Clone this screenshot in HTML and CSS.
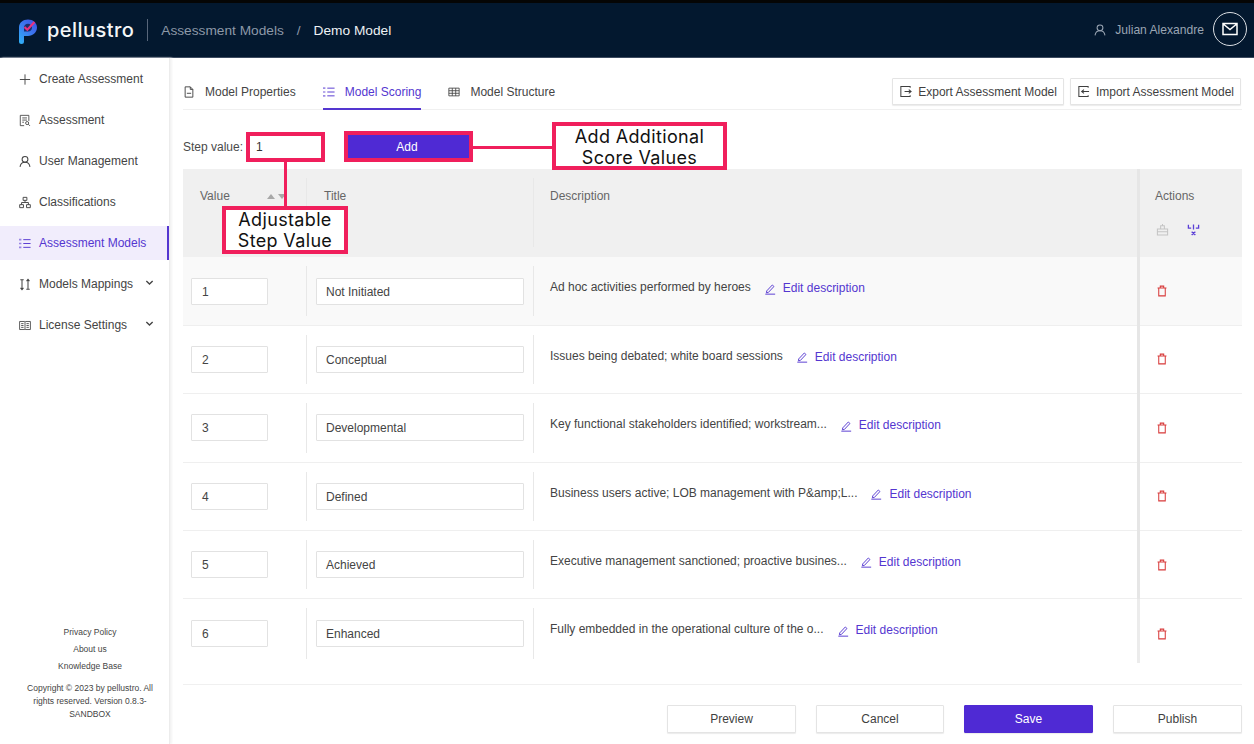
FILE: index.html
```html
<!DOCTYPE html>
<html lang="en">
<head>
<meta charset="utf-8">
<title>Demo Model</title>
<link rel="stylesheet" href="styles.css">
</head>
<body>
<svg class="defs" width="0" height="0" aria-hidden="true">
  <symbol id="i-list" viewBox="0 0 14 14"><path d="M5 2.500h8.500M5 7h8.500M5 11.500h8.500" fill="none" stroke="currentColor" stroke-width="1.100"/><path d="M.5 2.500h2.500M.5 7h2.500M.5 11.500h2.500" fill="none" stroke="currentColor" stroke-width="2" stroke-dasharray=".8 .5"/></symbol>
  <symbol id="i-pen" viewBox="0 0 14 14"><path d="M3.200 9.200 9.700 2.300l1.900 1.800-6.500 6.900-2.300.4zM1.500 13h11.500" fill="none" stroke="currentColor" stroke-width="1.100"/></symbol>
  <symbol id="i-trash" viewBox="0 0 14 14"><path d="M1.800 3.500h10.400M5 3.300V1.300h4v2M3.200 3.500v9.200h7.600V3.500" fill="none" stroke="currentColor" stroke-width="1.200"/></symbol>
  <symbol id="i-chev" viewBox="0 0 10 10"><path d="M1.500 3.300 5 6.700l3.500-3.400" fill="none" stroke="currentColor" stroke-width="1.500"/></symbol>
  <symbol id="i-user" viewBox="0 0 14 14"><circle cx="7" cy="4.500" r="3.400" fill="none" stroke="currentColor" stroke-width="1.200"/><path d="M1.200 13.300c.4-3.700 2.500-5.500 5.800-5.500s5.400 1.800 5.800 5.500" fill="none" stroke="currentColor" stroke-width="1.200"/></symbol>
</svg>

<header class="topbar">
  <div class="brand">
    <svg class="logo" viewBox="0 0 18 25" width="18" height="25" aria-hidden="true">
      <defs><linearGradient id="lg" x1="0" y1="1" x2=".8" y2="0"><stop offset="0" stop-color="#2fb4f7"/><stop offset=".55" stop-color="#3b7cf0"/><stop offset="1" stop-color="#3f55e6"/></linearGradient></defs>
      <path d="M0 8.500C0 3.500 4 .5 9 .5s9 3.500 9 8-4 8.500-9 8.500H5v5.500Q5 25 2.500 25T0 22.500z" fill="url(#lg)"/>
      <path d="M5 8.700c0-2.300 1.800-3.900 4-3.900s4 1.700 4 3.900-1.800 3.900-4 3.900H5z" fill="#1a2f6e"/>
      <path d="M5.500 8 8.300 10.700 15.500 3" fill="none" stroke="#e8317f" stroke-width="2.200"/>
    </svg>
    <span class="wordmark">pellustro</span>
  </div>
  <nav class="crumbs">
    <span class="crumb-dim">Assessment Models</span>
    <span class="crumb-sep">/</span>
    <span class="crumb-cur">Demo Model</span>
  </nav>
  <div class="account">
    <svg class="acc-icon"><use href="#i-user"/></svg>
    <span class="acc-name">Julian Alexandre</span>
    <span class="mail">
      <svg viewBox="0 0 16 14" width="16" height="14"><path d="M1 1.500h14v11H1zM1.300 2 8 7.500 14.700 2" fill="none" stroke="#fff" stroke-width="1.500"/></svg>
    </span>
  </div>
</header>

<div class="shell">
  <aside class="sidebar">
    <ul class="menu">
      <li class="item"><svg class="mi" viewBox="0 0 14 14"><path d="M7 1v12M1 7h12" stroke="currentColor" stroke-width="1.100"/></svg><span>Create Assessment</span></li>
      <li class="item"><svg class="mi" viewBox="0 0 14 14"><path d="M6 13H1.500V1h10v6.500M3.800 4h5.500M3.800 6.500h5.500M3.800 9h2" fill="none" stroke="currentColor" stroke-width="1"/><circle cx="9.500" cy="10" r="1.800" fill="none" stroke="currentColor"/><path d="m10.800 11.300 2 2" stroke="currentColor"/></svg><span>Assessment</span></li>
      <li class="item"><svg class="mi"><use href="#i-user"/></svg><span>User Management</span></li>
      <li class="item"><svg class="mi" viewBox="0 0 14 14"><path d="M4.800 1h4.400v3.500H4.800zM.8 9.500h4.400V13H.8zM8.800 9.500h4.400V13H8.800zM7 4.500V7M3 9.500V7h8v2.500" fill="none" stroke="currentColor" stroke-width="1.100"/></svg><span>Classifications</span></li>
      <li class="item active"><svg class="mi"><use href="#i-list"/></svg><span>Assessment Models</span></li>
      <li class="item"><svg class="mi" viewBox="0 0 14 14"><path d="M3.500 2v11M1.500 1.500h4M10.500 1v11M8.500 12.500h4M1.800 11 3.500 13l1.700-2M8.800 3 10.500 1l1.700 2" fill="none" stroke="currentColor" stroke-width="1.200"/></svg><span>Models Mappings</span><svg class="chev"><use href="#i-chev"/></svg></li>
      <li class="item"><svg class="mi" viewBox="0 0 14 14"><path d="M.7 2.300h5.800l.5.500.5-.5h5.800v9.400H7.500l-.5.500-.5-.5H.7zM7 2.800v8.900M2.500 4.800h2.800M2.500 7h2.800M2.500 9.200h2.800M8.700 4.800h2.800M8.700 7h2.800M8.700 9.200h2.800" fill="none" stroke="currentColor" stroke-width="1"/></svg><span>License Settings</span><svg class="chev"><use href="#i-chev"/></svg></li>
    </ul>
    <footer class="side-foot">
      <p class="foot-link">Privacy Policy</p>
      <p class="foot-link">About us</p>
      <p class="foot-link">Knowledge Base</p>
      <p class="copy">Copyright © 2023 by pellustro. All rights reserved. Version 0.8.3-SANDBOX</p>
    </footer>
  </aside>

  <main class="main">
    <div class="tabbar">
      <div class="tab"><svg class="ti" viewBox="0 0 14 14"><path d="M2.500 1h6l3 3v9h-9zM8.500 1v3h3M4.500 8.500h5" fill="none" stroke="currentColor" stroke-width="1.100"/></svg><span>Model Properties</span></div>
      <div class="tab tab-on"><svg class="ti"><use href="#i-list"/></svg><span>Model Scoring</span></div>
      <div class="tab"><svg class="ti" viewBox="0 0 14 14"><path d="M1 2.500h12v9H1zM1 5.500h12M1 8.500h12M5 2.500v9M9 2.500v9" fill="none" stroke="currentColor" stroke-width="1"/></svg><span>Model Structure</span></div>
      <div class="tab-actions">
        <button class="btn btn-io"><svg class="bi" viewBox="0 0 14 14"><path d="M12 3V1.500H2v11h10V11M6 7h7M10.500 5 13 7l-2.500 2" fill="none" stroke="currentColor" stroke-width="1.100"/></svg>Export Assessment Model</button>
        <button class="btn btn-io"><svg class="bi" viewBox="0 0 14 14"><path d="M12 3V1.500H2v11h10V11M5 7h8M7.500 5 5 7l2.500 2" fill="none" stroke="currentColor" stroke-width="1.100"/></svg>Import Assessment Model</button>
      </div>
    </div>

    <div class="steprow">
      <label class="step-label">Step value:</label>
      <div class="step-input">1</div>
      <button class="btn-add">Add</button>
    </div>

    <div class="grid">
      <div class="row head">
        <div class="cell c-value"><span>Value</span><span class="sort"><i class="up"></i><i class="down"></i></span></div>
        <div class="cell c-title">Title</div>
        <div class="cell c-desc">Description</div>
        <div class="cell c-act">
          <span>Actions</span>
          <span class="head-icons">
            <svg viewBox="0 0 14 14" width="13" height="13"><path d="M1.500 6.500h11v6.500h-11zM5 6.500V3h4v3.500M7 1v2M1.500 9.500h11" fill="none" stroke="#c4c4c4" stroke-width="1.100"/></svg>
            <svg viewBox="0 0 14 14" width="13" height="13"><path d="M1.500 2v3.500h3M12.500 2v3.500h-3M7 1.500V7M5 9.500l4 3.500M9 9.500 5 13" fill="none" stroke="#5b3fd6" stroke-width="1.400"/></svg>
          </span>
        </div>
      </div>

      <div class="row body first">
        <div class="cell c-value"><div class="field f-val">1</div></div>
        <div class="cell c-title"><div class="field f-title">Not Initiated</div></div>
        <div class="cell c-desc"><span class="dtext">Ad hoc activities performed by heroes</span><a class="edit"><svg class="ei"><use href="#i-pen"/></svg>Edit description</a></div>
        <div class="cell c-act"><svg class="trash"><use href="#i-trash"/></svg></div>
      </div>
      <div class="row body">
        <div class="cell c-value"><div class="field f-val">2</div></div>
        <div class="cell c-title"><div class="field f-title">Conceptual</div></div>
        <div class="cell c-desc"><span class="dtext">Issues being debated; white board sessions</span><a class="edit"><svg class="ei"><use href="#i-pen"/></svg>Edit description</a></div>
        <div class="cell c-act"><svg class="trash"><use href="#i-trash"/></svg></div>
      </div>
      <div class="row body">
        <div class="cell c-value"><div class="field f-val">3</div></div>
        <div class="cell c-title"><div class="field f-title">Developmental</div></div>
        <div class="cell c-desc"><span class="dtext">Key functional stakeholders identified; workstream...</span><a class="edit"><svg class="ei"><use href="#i-pen"/></svg>Edit description</a></div>
        <div class="cell c-act"><svg class="trash"><use href="#i-trash"/></svg></div>
      </div>
      <div class="row body">
        <div class="cell c-value"><div class="field f-val">4</div></div>
        <div class="cell c-title"><div class="field f-title">Defined</div></div>
        <div class="cell c-desc"><span class="dtext">Business users active; LOB management with P&amp;amp;L...</span><a class="edit"><svg class="ei"><use href="#i-pen"/></svg>Edit description</a></div>
        <div class="cell c-act"><svg class="trash"><use href="#i-trash"/></svg></div>
      </div>
      <div class="row body">
        <div class="cell c-value"><div class="field f-val">5</div></div>
        <div class="cell c-title"><div class="field f-title">Achieved</div></div>
        <div class="cell c-desc"><span class="dtext">Executive management sanctioned; proactive busines...</span><a class="edit"><svg class="ei"><use href="#i-pen"/></svg>Edit description</a></div>
        <div class="cell c-act"><svg class="trash"><use href="#i-trash"/></svg></div>
      </div>
      <div class="row body last">
        <div class="cell c-value"><div class="field f-val">6</div></div>
        <div class="cell c-title"><div class="field f-title">Enhanced</div></div>
        <div class="cell c-desc"><span class="dtext">Fully embedded in the operational culture of the o...</span><a class="edit"><svg class="ei"><use href="#i-pen"/></svg>Edit description</a></div>
        <div class="cell c-act"><svg class="trash"><use href="#i-trash"/></svg></div>
      </div>
    </div>

    <div class="actions">
      <button class="btn btn-foot btn-wide">Preview</button>
      <button class="btn btn-foot">Cancel</button>
      <button class="btn btn-foot btn-wide btn-primary">Save</button>
      <button class="btn btn-foot btn-wide">Publish</button>
    </div>

    <div class="conn conn-h"></div>
    <div class="conn conn-v"></div>
    <div class="callout callout-add">Add Additional<br>Score Values</div>
    <div class="callout callout-step">Adjustable<br>Step Value</div>
  </main>
</div>
</body>
</html>
```
FILE: styles.css
```css
* { box-sizing: border-box; }
html, body { margin: 0; padding: 0; }
body {
  width: 1254px;
  height: 744px;
  overflow: hidden;
  background: #fff;
  font-family: "Liberation Sans", Arial, sans-serif;
  font-size: 12px;
  color: #3f3f3f;
  display: flex;
  flex-direction: column;
}
.defs { position: absolute; }
p { margin: 0; }

/* top bar */
.topbar {
  height: 58px;
  flex: none;
  background: #03182f;
  border-top: 3px solid #050505;
  border-bottom: 1px solid #3d4b60;
  display: flex;
  align-items: center;
  padding: 0 7px 0 19px;
}
.brand { display: flex; align-items: center; gap: 10px; padding-top: 3px; }
.wordmark {
  font-family: Inter, sans-serif;
  font-size: 20px;
  font-weight: 500;
  letter-spacing: .45px;
  color: #f4f6f8;
  position: relative;
  top: -2px;
}
.crumbs {
  margin-left: 13px;
  padding-left: 13px;
  border-left: 1px solid #58667a;
  height: 22px;
  display: flex;
  align-items: center;
  font-size: 13.700px;
}
.crumb-dim { color: #8d99a8; }
.crumb-sep { color: #8d99a8; margin: 0 13px; }
.crumb-cur { color: #eef1f4; }
.account { margin-left: auto; display: flex; align-items: center; }
.acc-icon { width: 12px; height: 12px; color: #9aa5b3; margin-right: 9px; }
.acc-name { color: #9aa5b3; font-size: 12.100px; }
.mail {
  margin: 0 0 2px 9px;
  width: 34px;
  height: 34px;
  border: 1px solid #d9dde2;
  border-radius: 50%;
  display: flex;
  align-items: center;
  justify-content: center;
}

/* shell */
.shell { flex: 1; display: flex; min-height: 0; }

/* sidebar */
.sidebar {
  width: 170px;
  flex: none;
  display: flex;
  flex-direction: column;
  border-right: 1px solid #ececec;
  box-shadow: 2px 0 2px #f3f3f3;
}
.menu {
  list-style: none;
  margin: 0;
  padding: 4px 0 0;
  display: flex;
  flex-direction: column;
  gap: 7px;
}
.item {
  height: 34px;
  display: flex;
  align-items: center;
  padding-left: 19px;
  color: #444;
  font-size: 12px;
  position: relative;
}
.mi { width: 12px; height: 13px; margin-right: 8px; flex: none; overflow: visible; }
.item.active { background: #f1edfc; color: #5436d0; border-right: 2px solid #5436d0; }
.chev { width: 9px; height: 9px; position: absolute; left: 145px; top: 11px; color: #444; }
.side-foot {
  margin-top: auto;
  padding: 0 15px 23px 26px;
  text-align: center;
  font-size: 8.500px;
  color: #444;
}
.foot-link { line-height: 17px; }
.copy { line-height: 13px; margin-top: 7px; }

/* main */
.main { flex: 1; position: relative; padding: 0 12px 0 13px; min-width: 0; }
.tabbar {
  height: 52px;
  display: flex;
  align-items: flex-end;
  border-bottom: 1px solid #f0f0f0;
}
.tab {
  height: 33px;
  display: flex;
  align-items: center;
  margin-right: 27px;
  padding-bottom: 4px;
  color: #444;
  position: relative;
  top: 1px;
}
.ti { width: 12px; height: 12px; margin-right: 10px; flex: none; }
.tab-on { color: #5436d0; border-bottom: 2px solid #5436d0; padding-bottom: 2px; }
.tab-actions {
  margin-left: auto;
  display: flex;
  gap: 6px;
  align-self: flex-start;
  padding: 20px 1px 0 0;
}
.btn {
  font-family: inherit;
  font-size: 12px;
  color: #3f3f3f;
  background: #fff;
  border: 1px solid #e4e4e4;
  box-shadow: 0 1px 1px #ececec;
  border-radius: 1px;
  padding: 0;
}
.btn-io {
  height: 27px;
  padding: 0 6px;
  display: flex;
  align-items: center;
}
.bi { width: 13px; height: 13px; margin-right: 6px; }

/* step row */
.steprow {
  height: 31px;
  margin-top: 21px;
  margin-bottom: 7.400px;
  display: flex;
  align-items: center;
}
.step-label { font-size: 12px; color: #4a4a4a; width: 63px; flex: none; padding-top: 1px; }
.step-input {
  width: 79px;
  height: 30px;
  border: 4px solid #f01f5c;
  padding-left: 6px;
  line-height: 23px;
  color: #333;
}
.btn-add {
  margin-left: 19px;
  width: 129px;
  height: 31px;
  background: #4f2ad4;
  border: 4px solid #f01f5c;
  color: #fff;
  font-family: inherit;
  font-size: 12px;
  padding: 1px 3px 0 0;
}

/* grid */
.grid { width: 1059px; }
.row { display: grid; grid-template-columns: 123px 227px 604px 105px; }
.head { height: 88px; background: #f0f0f0; color: #666; }
.body { height: 68.400px; border-bottom: 1px solid #efefef; }
.first { background: #f9f9f9; }
.last { border-bottom: 0; }
.cell { position: relative; }
.head .cell { padding-top: 20px; }
.head .c-value { padding-left: 17px; display: flex; }
.head .c-title { padding-left: 18px; }
.head .c-desc { padding-left: 17px; }
.head .c-title::before, .head .c-desc::before, .body .c-title::before, .body .c-desc::before {
  content: "";
  position: absolute;
  left: 0;
  top: 9px;
  bottom: 9px;
  width: 1px;
  background: #e8e8e8;
}
.head .c-title::before, .head .c-desc::before { bottom: 10px; }
.sort { margin-left: 37px; margin-top: 5px; display: flex; gap: 3px; }
.sort i { display: block; width: 0; height: 0; border-left: 4px solid transparent; border-right: 4px solid transparent; }
.sort .up { border-bottom: 5px solid #a8a8a8; }
.sort .down { border-top: 5px solid #a8a8a8; }
.c-act::before {
  content: "";
  position: absolute;
  left: 0;
  top: 0;
  bottom: -1px;
  width: 3px;
  background: #e6e6e6;
}
.head .c-act { padding-left: 18px; display: flex; flex-direction: column; }
.head-icons { display: flex; gap: 18px; margin-top: 20px; padding-left: 1px; }
.body .c-value, .body .c-title { display: flex; align-items: center; }
.body .c-value { padding-left: 8px; }
.body .c-title { padding-left: 10px; }
.field {
  height: 27px;
  background: #fff;
  border: 1px solid #e2e2e2;
  border-radius: 1px;
  padding-left: 9px;
  line-height: 26px;
  color: #444;
}
.f-val { width: 77px; padding-left: 10px; }
.f-title { width: 208px; }
.body .c-desc { padding: 23px 0 0 17px; display: flex; align-items: flex-start; line-height: 15px; color: #444; }
.dtext { margin-right: 13px; }
.edit { display: flex; align-items: center; color: #5436d0; position: relative; top: 1px; }
.ei { width: 12px; height: 12px; margin-right: 7px; }
.body .c-act { display: flex; align-items: center; padding-left: 19px; }
.last .c-act::before { bottom: 5px; background: #ececec; }
.trash { width: 12px; height: 12px; color: #d83a3a; }

/* actions */
.actions {
  margin-top: 16.600px;
  border-top: 1px solid #f0f0f0;
  padding-top: 20px;
  width: 1059px;
  display: flex;
  justify-content: flex-end;
  gap: 20px;
}
.btn-foot { width: 128px; height: 28px; }
.btn-wide { width: 129px; }
.btn-primary { background: #4f2ad4; border-color: #4f2ad4; color: #fff; }

/* annotations */
.conn { position: absolute; background: #f01f5c; }
.conn-h { left: 303px; top: 88px; width: 80px; height: 3px; }
.conn-v { left: 114px; top: 103px; width: 3px; height: 46px; }
.callout {
  position: absolute;
  background: #fff;
  border: 4px solid #f01f5c;
  color: #111;
  font-family: Inter, sans-serif;
  font-size: 18px;
  letter-spacing: .35px;
  line-height: 21px;
  text-align: center;
}
.callout-add { left: 382px; top: 64px; width: 175px; height: 48px; }
.callout-step { left: 52px; top: 148px; width: 126px; height: 48px; line-height: 20.500px; }
```
